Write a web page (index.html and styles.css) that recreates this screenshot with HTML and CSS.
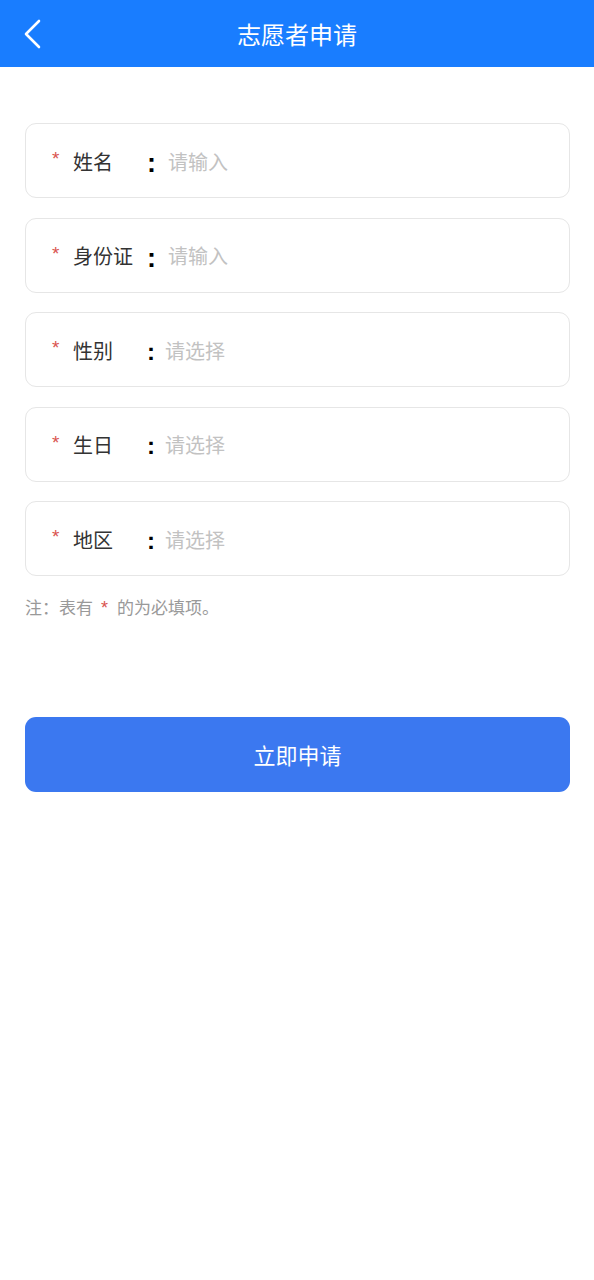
FILE: index.html
```html
<!DOCTYPE html>
<html lang="zh">
<head>
<meta charset="utf-8">
<title>志愿者申请</title>
<link rel="stylesheet" href="styles.css">
</head>
<body>
<header class="nav">
  <span class="back">
    <svg width="20" height="30" viewBox="0 0 20 30"><path d="M16 2 L3 15 L16 28" fill="none" stroke="#fff" stroke-width="2.6" stroke-linecap="round" stroke-linejoin="round"/></svg>
  </span>
  <h1 class="title">志愿者申请</h1>
</header>
<main class="form">
  <div class="field">
    <span class="star">*</span><span class="label">姓名</span><span class="colon">:</span><span class="ph">请输入</span>
  </div>
  <div class="field">
    <span class="star">*</span><span class="label">身份证</span><span class="colon">:</span><span class="ph">请输入</span>
  </div>
  <div class="field">
    <span class="star">*</span><span class="label">性别</span><span class="colon thin">:</span><span class="ph sel">请选择</span>
  </div>
  <div class="field">
    <span class="star">*</span><span class="label">生日</span><span class="colon thin">:</span><span class="ph sel">请选择</span>
  </div>
  <div class="field">
    <span class="star">*</span><span class="label">地区</span><span class="colon thin">:</span><span class="ph sel">请选择</span>
  </div>
  <p class="note">注：表有<span class="red">*</span>的为必填项。</p>
  <button class="submit">立即申请</button>
</main>
</body>
</html>
```
FILE: styles.css
```css
* { box-sizing: border-box; }
body {
  margin: 0;
  background: #fff;
  font-family: "Noto Sans CJK SC", "Noto Sans", sans-serif;
  color: #333;
}
.nav {
  height: 67px;
  background: #197dff;
  display: flex;
  align-items: center;
  justify-content: center;
  position: relative;
}
.back {
  position: absolute;
  left: 23px;
  top: 19px;
  width: 20px;
  height: 30px;
  display: block;
}
.back svg { display: block; }
.title {
  margin: 0;
  font-size: 24px;
  font-weight: 400;
  color: #fff;
  line-height: 1;
}
.form {
  padding: 56px 24px 0 25px;
  display: flex;
  flex-direction: column;
}
.field {
  height: 75px;
  border: 1px solid #e6e6e6;
  border-radius: 11px;
  display: flex;
  align-items: center;
  padding-left: 26px;
  margin-bottom: 19.5px;
}
.star {
  color: #d9534f;
  font-size: 19px;
  width: 21px;
  position: relative;
  top: -2px;
  font-family: "Liberation Sans", sans-serif;
  line-height: 1;
}
.label {
  width: 74px;
  font-size: 20px;
  color: #333;
  line-height: 1;
  position: relative;
  top: 1px;
}
.colon {
  font-family: "Liberation Sans", sans-serif;
  font-weight: 700;
  font-size: 27px;
  color: #000;
  line-height: 1;
  width: 8px;
  text-align: center;
  position: relative;
  top: 3px;
}
.colon.thin {
  font-size: 24px;
  top: 2px;
}
.ph {
  font-size: 20px;
  color: #c2c2c2;
  line-height: 1;
  margin-left: 13px;
  position: relative;
  top: 1px;
}
.ph.sel { margin-left: 10px; }
.note {
  margin: -1px 0 0 0;
  font-size: 17px;
  color: #999;
  line-height: 24px;
}
.red {
  color: #d9534f;
  font-family: "Liberation Sans", sans-serif;
  font-size: 18px;
  margin: 0 9px 0 8px;
}
.submit {
  margin-top: 97px;
  height: 75px;
  border: 0;
  border-radius: 11px;
  background: #3b78f0;
  color: #fff;
  font-family: "Noto Sans CJK SC", "Noto Sans", sans-serif;
  font-size: 22px;
  width: 100%;
}
```
